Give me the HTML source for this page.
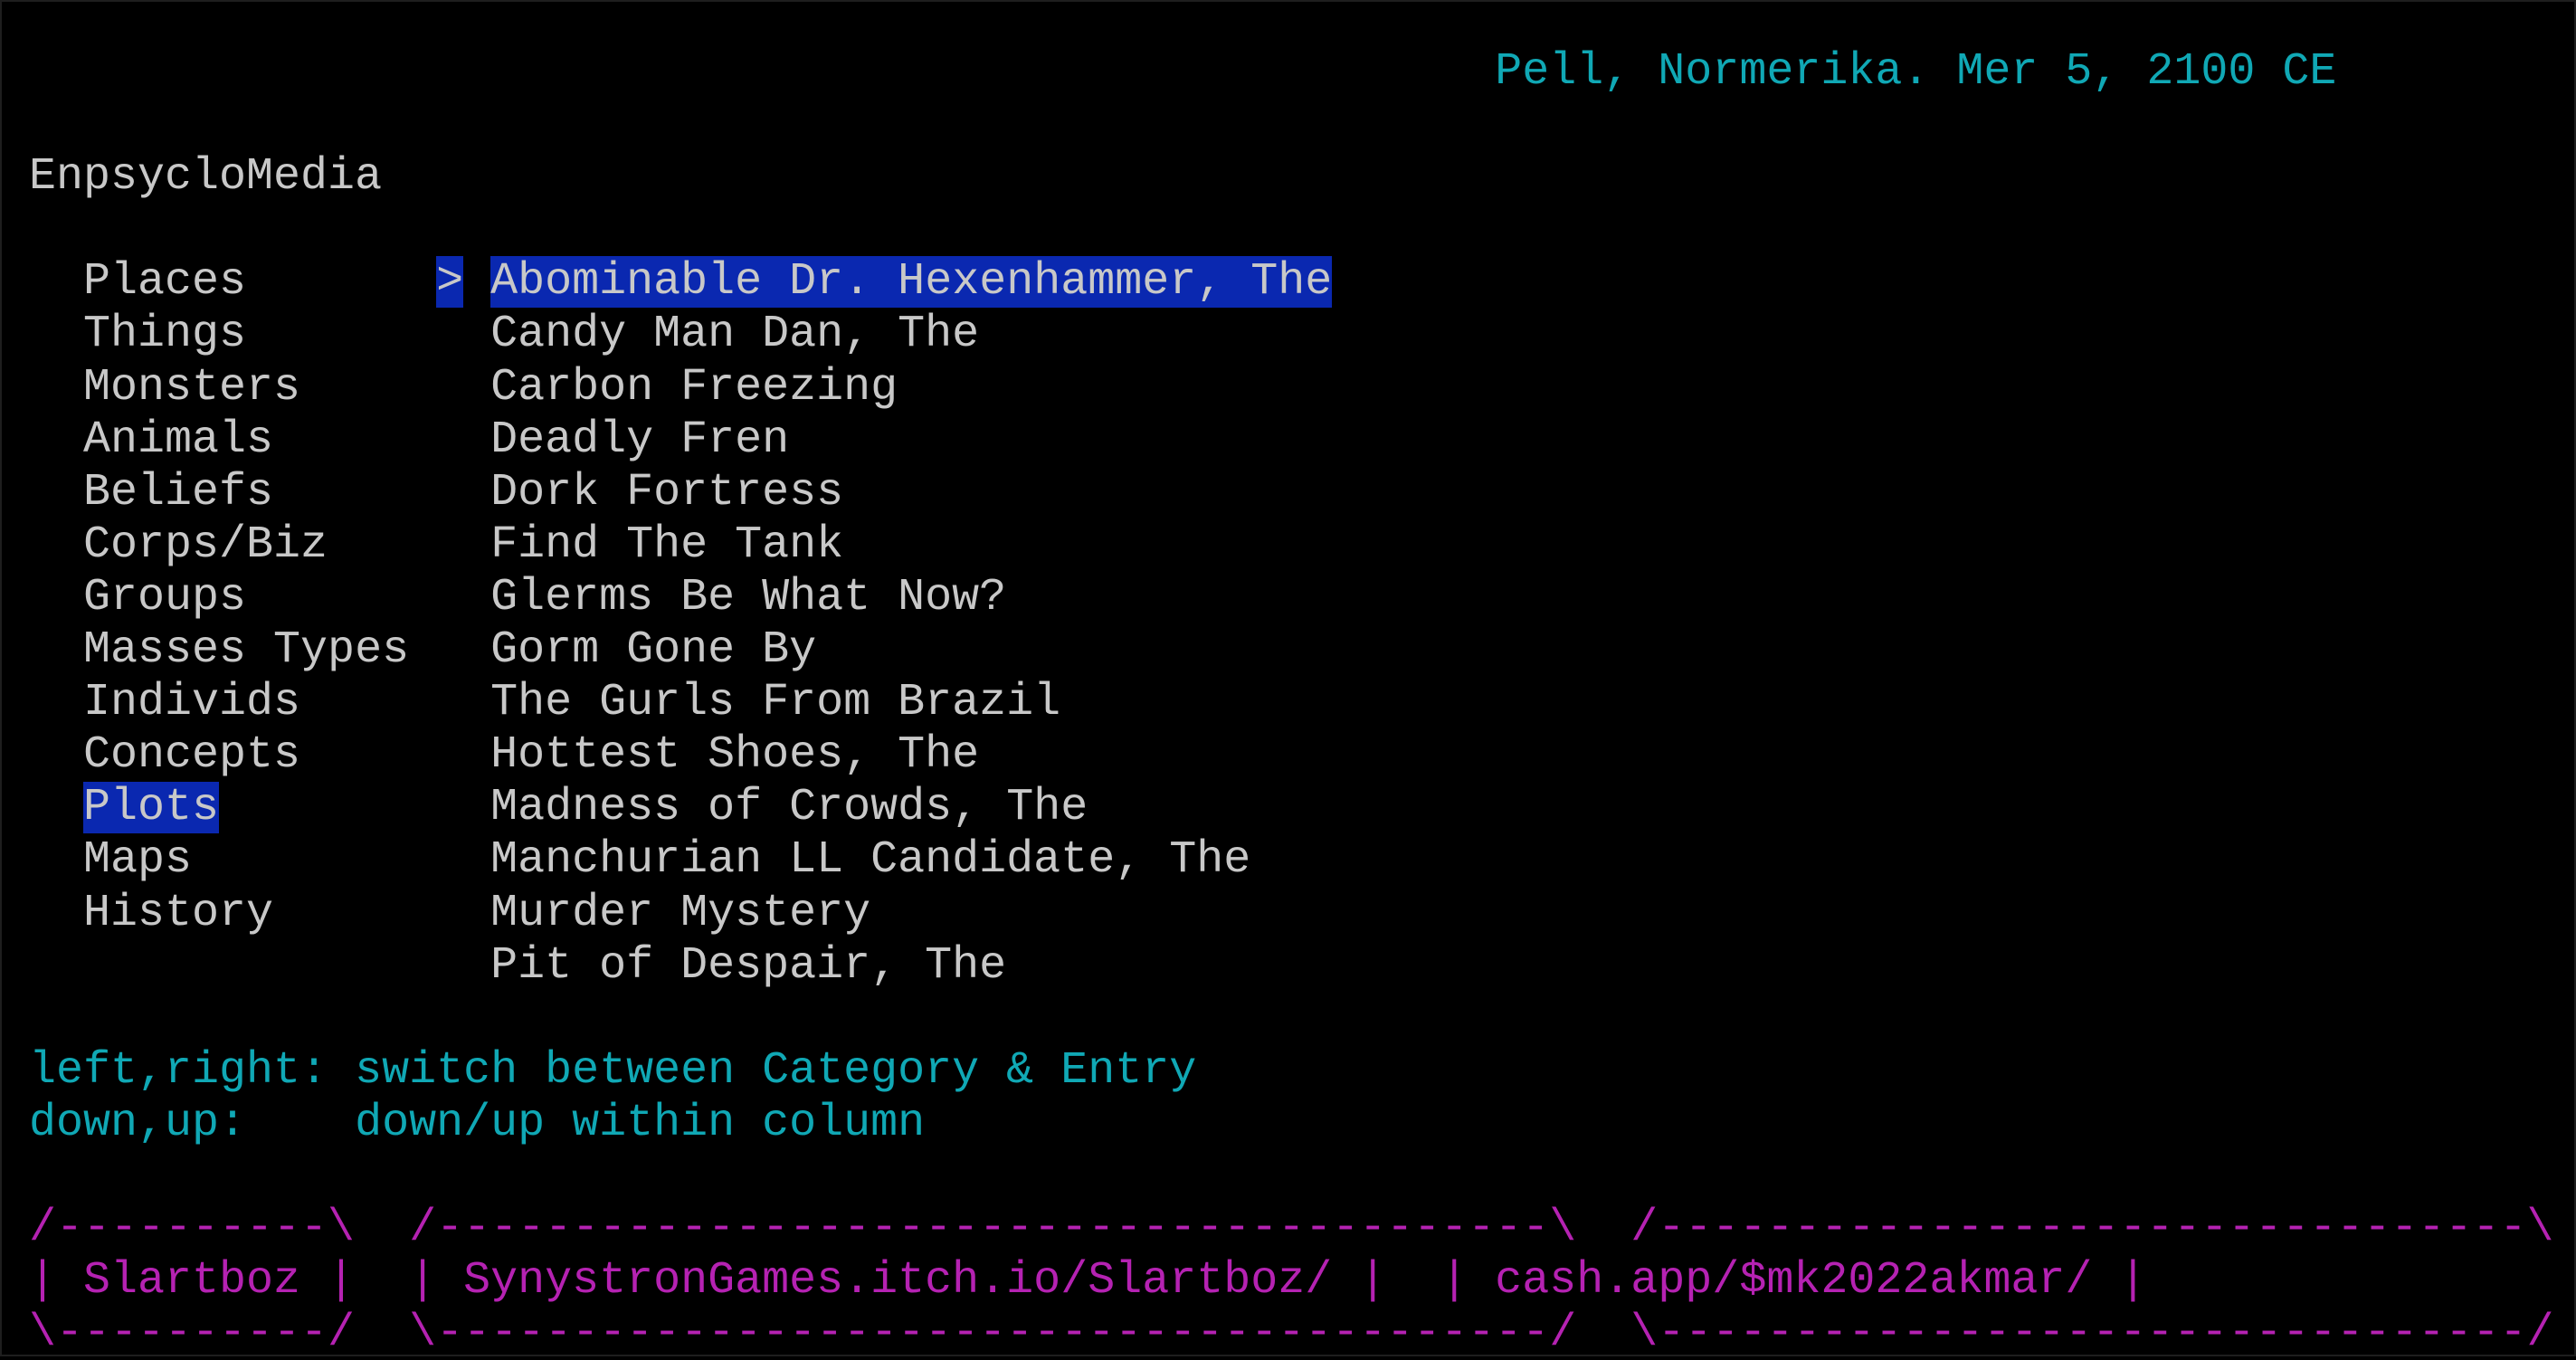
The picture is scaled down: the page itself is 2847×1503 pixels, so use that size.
<!DOCTYPE html>
<html><head><meta charset="utf-8"><style>
html,body{margin:0;padding:0;background:#000;}
body{width:2847px;height:1499px;overflow:hidden;position:relative;box-shadow:inset 0 0 0 2px #1e1e1e;}
pre{position:absolute;left:2px;top:51px;margin:0;font-family:"Liberation Mono",monospace;font-size:50px;line-height:58.1px;color:#c8c8c8;white-space:pre;}
.c{color:#10a8b5}
.m{color:#b522b2}
.h{background:#0a28b0;color:#c8c8c8}
</style></head><body><pre><span class="c">                                                       Pell, Normerika. Mer 5, 2100 CE</span>

 EnpsycloMedia

   Places       <span class="h">&gt;</span> <span class="h">Abominable Dr. Hexenhammer, The</span>
   Things         Candy Man Dan, The
   Monsters       Carbon Freezing
   Animals        Deadly Fren
   Beliefs        Dork Fortress
   Corps/Biz      Find The Tank
   Groups         Glerms Be What Now?
   Masses Types   Gorm Gone By
   Individs       The Gurls From Brazil
   Concepts       Hottest Shoes, The
   <span class="h">Plots</span>          Madness of Crowds, The
   Maps           Manchurian LL Candidate, The
   History        Murder Mystery
                  Pit of Despair, The

<span class="c"> left,right: switch between Category &amp; Entry
 down,up:    down/up within column</span>

<span class="m"> /----------\  /-----------------------------------------\  /--------------------------------\
 | Slartboz |  | SynystronGames.itch.io/Slartboz/ |  | cash.app/$mk2022akmar/ |
 \----------/  \-----------------------------------------/  \--------------------------------/</span></pre>
</body></html>
